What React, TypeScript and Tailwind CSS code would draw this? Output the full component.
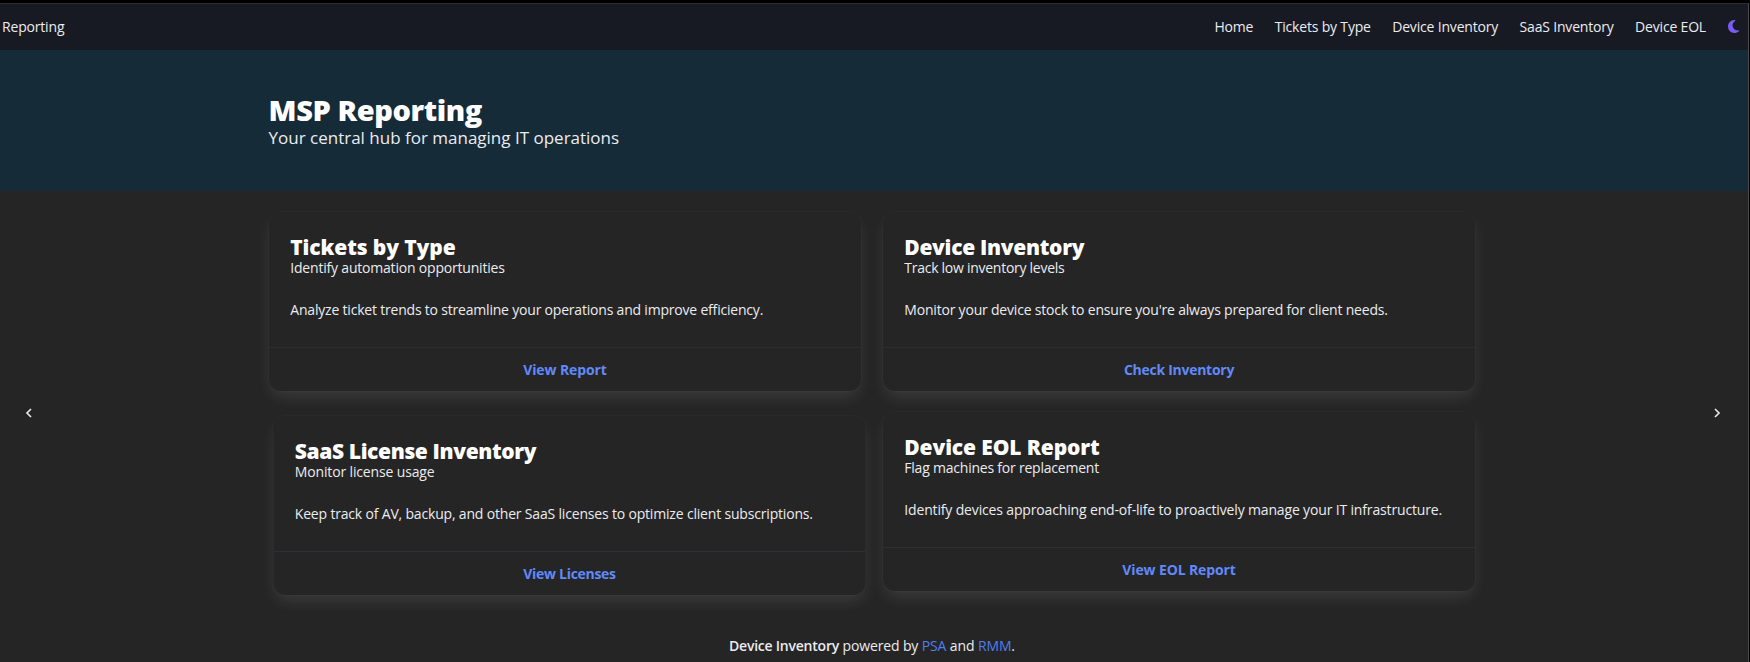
import React from "react";

interface ReportCard {
  title: string;
  titleClass: string;
  subtitle: string;
  subtitleClass: string;
  body: string;
  bodyClass: string;
  action: string;
  actionClass: string;
  cardClass: string;
  dividerClass: string;
}

const cards: ReportCard[] = [
  {
    title: "Tickets by Type",
    titleClass: "tracking-[-0.1px]",
    subtitle: "Identify automation opportunities",
    subtitleClass: "tracking-[-0.2px]",
    body: "Analyze ticket trends to streamline your operations and improve efficiency.",
    bodyClass: "tracking-[-0.2px]",
    action: "View Report",
    actionClass: "tracking-[-0.1px]",
    cardClass: "",
    dividerClass: "border-[#2e2e2f]",
  },
  {
    title: "Device Inventory",
    titleClass: "tracking-[-0.3px]",
    subtitle: "Track low inventory levels",
    subtitleClass: "tracking-[-0.27px]",
    body: "Monitor your device stock to ensure you're always prepared for client needs.",
    bodyClass: "tracking-[-0.2px]",
    action: "Check Inventory",
    actionClass: "tracking-[-0.27px]",
    cardClass: "",
    dividerClass: "border-[#2e2e2f]",
  },
  {
    title: "SaaS License Inventory",
    titleClass: "tracking-[-0.37px]",
    subtitle: "Monitor license usage",
    subtitleClass: "tracking-[-0.15px]",
    body: "Keep track of AV, backup, and other SaaS licenses to optimize client subscriptions.",
    bodyClass: "tracking-[-0.18px]",
    action: "View Licenses",
    actionClass: "tracking-[-0.29px]",
    cardClass: "translate-x-[4.5px] translate-y-[4px]",
    dividerClass: "border-[#2e2f38]",
  },
  {
    title: "Device EOL Report",
    titleClass: "tracking-[-0.12px]",
    subtitle: "Flag machines for replacement",
    subtitleClass: "tracking-[-0.22px]",
    body: "Identify devices approaching end-of-life to proactively manage your IT infrastructure.",
    bodyClass: "tracking-[-0.155px]",
    action: "View EOL Report",
    actionClass: "tracking-[-0.13px]",
    cardClass: "",
    dividerClass: "border-[#2e2f33]",
  },
];

const links = ["Home", "Tickets by Type", "Device Inventory", "SaaS Inventory", "Device EOL"];

function Card({ card }: { card: ReportCard }) {
  return (
    <article
      className={`flex h-[179px] flex-col rounded-xl bg-[#252525] shadow-[0_8px_16px_-2px_rgba(255,255,255,0.1),0_0_0_1px_rgba(255,255,255,0.02)] ${card.cardClass}`}
    >
      <div className="flex-1 px-[21.3px] pt-[23px]">
        <h2 className={`text-[21px] leading-[25px] font-extrabold text-white ${card.titleClass}`}>{card.title}</h2>
        <p className={`leading-[15px] ${card.subtitleClass}`}>{card.subtitle}</p>
        <p className={`mt-6 leading-[22px] ${card.bodyClass}`}>{card.body}</p>
      </div>
      <footer className={`flex h-[44px] items-center justify-center border-t ${card.dividerClass}`}>
        <a href="#" className={`font-bold text-[#6189fa] ${card.actionClass}`}>
          {card.action}
        </a>
      </footer>
    </article>
  );
}

function Chevron({ direction }: { direction: "left" | "right" }) {
  return (
    <svg width="8" height="10" viewBox="0 0 8 10" fill="none" stroke="#e6e6e6" strokeWidth="1.7">
      <path d={direction === "left" ? "M6 1 L2 5 L6 9" : "M2 1 L6 5 L2 9"} />
    </svg>
  );
}

export default function App() {
  return (
    <div className="flex h-[662px] w-[1750px] flex-col overflow-hidden bg-black pt-[3px] pr-px font-['Open_Sans','Noto_Sans',sans-serif] text-[14px] whitespace-nowrap text-[#ebecf0]">
      <div className="flex flex-1 flex-col border-t border-r border-t-[#2b2d31] border-r-[#4b4b4b] bg-[#252525]">
        <header className="flex h-[46px] shrink-0 items-center justify-between bg-[#181a23] pr-[9px] pb-[2px] pl-[2px] tracking-[-0.18px]">
          <span>Reporting</span>
          <div className="flex items-center">
            <nav className="flex gap-[21.4px]">
              {links.map((label) => (
                <a key={label} href="#">
                  {label}
                </a>
              ))}
            </nav>
            <button aria-label="Toggle theme" className="ml-[22px]">
              <svg width="11" height="13" viewBox="0 32 384 448" preserveAspectRatio="none" fill="#7b5cf0">
                <path d="M223.500 32C100 32 0 132.300 0 256s100 224 223.500 224c60.600 0 115.500-24.200 155.800-63.400c5-4.900 6.300-12.500 3.100-18.700s-10.100-9.700-17-8.500c-9.800 1.700-19.800 2.600-30.100 2.600c-96.900 0-175.500-78.800-175.500-176c0-65.800 36-123.100 89.300-153.300c6.100-3.500 9.200-10.500 7.700-17.300s-7.300-11.900-14.300-12.500c-6.300-.5-12.600-.8-19-.8z" />
              </svg>
            </button>
          </div>
        </header>

        <section className="h-[141px] shrink-0 bg-[#162b38] pt-[44px] pl-[268.5px]">
          <h1 className="text-[29px] leading-8 font-extrabold tracking-[-0.4px] text-white">MSP Reporting</h1>
          <p className="text-[17px] leading-[24px]">Your central hub for managing IT operations</p>
        </section>

        <main className="flex flex-1">
          <button aria-label="Previous" className="flex w-[269px] pt-[217px] pl-[25px]">
            <Chevron direction="left" />
          </button>
          <div className="w-[1206px] pt-[21px]">
            <div className="grid grid-cols-2 gap-x-[22px] gap-y-[21px]">
              {cards.map((card) => (
                <Card key={card.title} card={card} />
              ))}
            </div>
            <p className="mt-[44px] text-center leading-[22px] tracking-[-0.13px]">
              <strong className="font-semibold tracking-[-0.23px]">Device Inventory</strong> powered by{" "}
              <a href="#" className="text-[#4f7df0]">PSA</a> and{" "}
              <a href="#" className="text-[#4f7df0]">RMM</a>.
            </p>
          </div>
          <button aria-label="Next" className="flex flex-1 justify-end pt-[217px] pr-[27px]">
            <Chevron direction="right" />
          </button>
        </main>
      </div>
    </div>
  );
}
